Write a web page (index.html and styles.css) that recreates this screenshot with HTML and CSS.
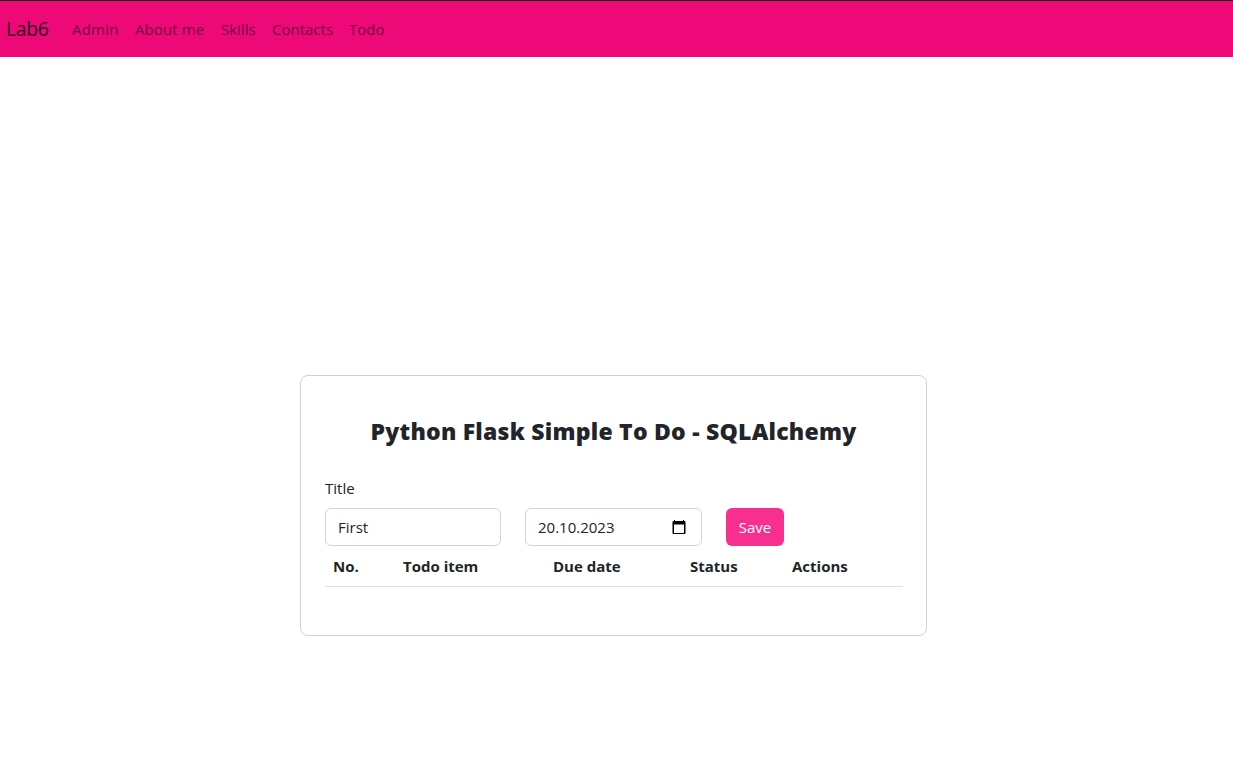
FILE: index.html
```
<!DOCTYPE html>
<html lang="en">
<head>
<meta charset="utf-8">
<title>Lab6</title>
<link rel="stylesheet" href="styles.css">
</head>
<body>
<nav class="navbar">
  <a class="brand">Lab6</a>
  <a class="link admin">Admin</a>
  <a class="link about">About me</a>
  <a class="link skills">Skills</a>
  <a class="link contacts">Contacts</a>
  <a class="link">Todo</a>
</nav>
<main class="card">
  <h1 class="heading">Python Flask Simple To Do - SQLAlchemy</h1>
  <div class="label">Title</div>
  <form class="form">
    <div class="field">First</div>
    <div class="field date"><span>20.10.2023</span>
      <svg class="calendar" width="14" height="14" viewBox="0 0 14 14"><path fill="#000" d="M2 0h1v1h8V0h1v1h.5q1 0 1 1v11q0 1-1 1h-11q-1 0-1-1V2q0-1 1-1H2zM2 4.500V13h10V4.500z"/></svg>
    </div>
    <button class="save" type="button">Save</button>
  </form>
  <table class="table">
    <thead><tr><th class="no">No.</th><th class="item">Todo item</th><th class="due">Due date</th><th class="status">Status</th><th>Actions</th></tr></thead>
  </table>
</main>
</body>
</html>
```
FILE: styles.css
```
* { box-sizing: border-box; }
body {
  margin: 0;
  min-height: 767px;
  background: #fff;
  color: #212529;
  font: 15px/24px "Open Sans", "Noto Sans", sans-serif;
}
.navbar {
  height: 57px;
  padding: 0 6px;
  display: flex;
  align-items: center;
  background: #ee0979;
  border-top: 1px solid #1b1014;
  white-space: nowrap;
}
.brand { width: 66px; font-size: 19.5px; color: #30021a; letter-spacing: -0.4px; }
.link { color: #72063d; }
.admin { width: 63px; letter-spacing: 0.2px; }
.about { width: 86px; letter-spacing: 0.1px; }
.skills { width: 51px; }
.contacts { width: 77px; }
.card {
  width: 627px;
  height: 261px;
  margin: 318px 0 0 300px;
  padding: 39px 24px 0;
  border: 1px solid #d1d2d4;
  border-radius: 8px;
}
.heading {
  margin: 0;
  height: 61px;
  font-size: 23px;
  line-height: 32px;
  font-weight: 800;
  letter-spacing: 0.23px;
  text-align: center;
  white-space: nowrap;
}
.label { height: 32px; }
.form { display: flex; gap: 24px; }
.field {
  width: 176px;
  height: 38px;
  padding: 6px 12px;
  border: 1px solid #ced4da;
  border-radius: 6px;
}
.date {
  width: 177px;
  padding-right: 15px;
  display: flex;
  justify-content: space-between;
  align-items: center;
}
.calendar { display: block; }
.save {
  width: 58px;
  height: 38px;
  padding: 0;
  border: 0;
  border-radius: 6px;
  background: #f72f8e;
  color: #fff;
  font: inherit;
}
.table {
  width: 578px;
  table-layout: fixed;
  border-spacing: 0;
}
.table th {
  height: 41px;
  padding: 8px;
  border-bottom: 1px solid #dee2e6;
  text-align: left;
  font-weight: 700;
}
.no { width: 70px; }
.item { width: 150px; }
.due { width: 137px; }
.status { width: 102px; }
```
